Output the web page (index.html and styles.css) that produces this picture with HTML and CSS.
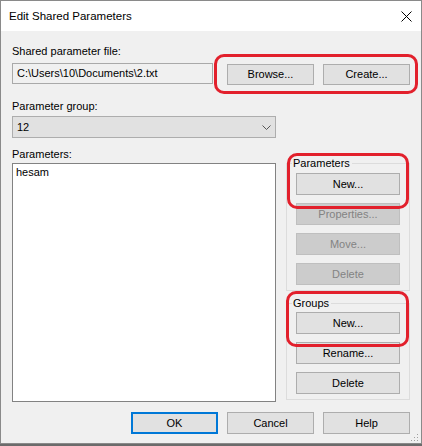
FILE: index.html
```html
<!DOCTYPE html>
<html>
<head>
<meta charset="utf-8">
<link rel="stylesheet" href="styles.css">
</head>
<body>
<div class="dialog">
  <div class="titlebar">
    <span class="title">Edit Shared Parameters</span>
    <svg class="close" width="11" height="11" viewBox="0 0 11 11"><path d="M0.5 0.5 L10.5 10.5 M10.5 0.5 L0.5 10.5" stroke="#000" stroke-width="1" fill="none"/></svg>
  </div>
  <div class="content">
    <div class="label">Shared parameter file:</div>
    <div class="file-row">
      <div class="textbox">C:\Users\10\Documents\2.txt</div>
      <div class="btn-pair hl hl-file">
        <button class="btn">Browse...</button>
        <button class="btn">Create...</button>
      </div>
    </div>
    <div class="label label-group">Parameter group:</div>
    <div class="combo">
      <span>12</span>
      <svg width="9" height="5" viewBox="0 0 9 5"><path d="M0.5 0.5 L4.5 4.5 L8.5 0.5" stroke="#555" stroke-width="1" fill="none"/></svg>
    </div>
    <div class="main">
      <div class="left">
        <div class="label">Parameters:</div>
        <div class="listbox"><div class="item">hesam</div></div>
      </div>
      <div class="right">
        <div class="group group-params hl">
          <div class="group-title">Parameters</div>
          <div class="group-buttons">
            <button class="btn">New...</button>
            <button class="btn" disabled>Properties...</button>
            <button class="btn" disabled>Move...</button>
            <button class="btn" disabled>Delete</button>
          </div>
        </div>
        <div class="group group-groups hl">
          <div class="group-title">Groups</div>
          <div class="group-buttons">
            <button class="btn">New...</button>
            <button class="btn">Rename...</button>
            <button class="btn">Delete</button>
          </div>
        </div>
      </div>
    </div>
    <div class="footer">
      <button class="btn btn-default">OK</button>
      <button class="btn">Cancel</button>
      <button class="btn">Help</button>
    </div>
  </div>
  <svg class="grip" width="8" height="8" viewBox="0 0 8 8">
    <rect x="6" y="0" width="1" height="1" fill="#a0a0a0"/>
    <rect x="3" y="3" width="1" height="1" fill="#a0a0a0"/>
    <rect x="6" y="3" width="1" height="1" fill="#a0a0a0"/>
    <rect x="0" y="6" width="1" height="1" fill="#a0a0a0"/>
    <rect x="3" y="6" width="1" height="1" fill="#a0a0a0"/>
    <rect x="6" y="6" width="1" height="1" fill="#a0a0a0"/>
  </svg>
</div>
</body>
</html>
```
FILE: styles.css
```css
* { box-sizing: border-box; }
html, body { margin: 0; padding: 0; }
body {
  background: #6b6b6b;
  font-family: "Liberation Sans", Arial, sans-serif;
  font-size: 11px;
  line-height: 15px;
  color: #000;
}
.dialog {
  position: relative;
  width: 422px;
  height: 444px;
  border: 1px solid #8a8a8a;
  background: #f0f0f0;
  display: flex;
  flex-direction: column;
}
.titlebar {
  height: 30px;
  background: #fff;
  display: flex;
  align-items: center;
  justify-content: space-between;
  padding: 0 9px 0 8px;
  flex: none;
}
.title { font-size: 11.5px; }
.close { display: block; margin-top: 1px; }
.content {
  padding: 13px 11px 0 11px;
  display: flex;
  flex-direction: column;
}
.label { height: 15px; }
.file-row {
  margin-top: 4px;
  display: flex;
  align-items: flex-start;
}
.textbox {
  width: 201px;
  height: 21px;
  border: 1px solid #a9a9a9;
  background: #f0f0f0;
  padding: 2px 0 0 4px;
  white-space: nowrap;
  overflow: hidden;
}
.btn-pair {
  margin-left: 14px;
  margin-top: 1px;
  display: flex;
  gap: 9px;
}
.btn {
  font-family: inherit;
  font-size: 11px;
  line-height: 15px;
  color: #000;
  background: #e1e1e1;
  border: 1px solid #adadad;
  border-radius: 0;
  height: 21px;
  width: 87px;
  padding: 0;
  margin: 0;
  text-align: center;
}
.btn:disabled {
  background: #cccccc;
  border-color: #bfbfbf;
  color: #838383;
}
.btn-default { border: 2px solid #0078d7; }
.label-group { margin-top: 14px; }
.combo {
  margin-top: 2px;
  width: 264px;
  height: 22px;
  background: #e1e1e1;
  border: 1px solid #adadad;
  display: flex;
  align-items: center;
  justify-content: space-between;
  padding: 0 4px 0 4px;
}
.combo svg { display: block; }
.main {
  margin-top: 9px;
  display: grid;
  grid-template-columns: 264px 124px;
  column-gap: 10px;
}
.listbox {
  margin-top: 1px;
  height: 239px;
  background: #fff;
  border: 1px solid #828282;
  padding: 1px 0 0 3px;
}
.right { padding-top: 16px; }
.group {
  position: relative;
  border: 1px solid #dcdcdc;
  padding: 0 9px 5px 9px;
}
.group-groups { margin-top: 12px; }
.group-title {
  width: fit-content;
  background: #f0f0f0;
  margin: -8px 0 0 -4px;
  padding: 0 2px 0 1px;
}
.group-buttons {
  display: flex;
  flex-direction: column;
  gap: 8px;
  margin-top: 2px;
}
.group-groups .group-buttons { margin-top: 1px; }
.group-buttons .btn { width: 104px; height: 22px; }
.footer {
  margin-top: 10px;
  display: flex;
  justify-content: flex-end;
  gap: 9px;
}
.footer .btn { height: 22px; }
.hl { position: relative; }
.hl::after {
  content: "";
  position: absolute;
  border: 3px solid #e2202c;
  border-radius: 10px;
  pointer-events: none;
}
.hl-file::after { left: -13px; right: -8px; top: -10px; bottom: -9px; }
.group-params::after { left: 0; right: 0; top: -11px; height: 50px; }
.group-groups::after { left: -1px; right: 0; top: -13px; height: 50px; }
.grip { position: absolute; right: 2px; bottom: 1px; }
```
